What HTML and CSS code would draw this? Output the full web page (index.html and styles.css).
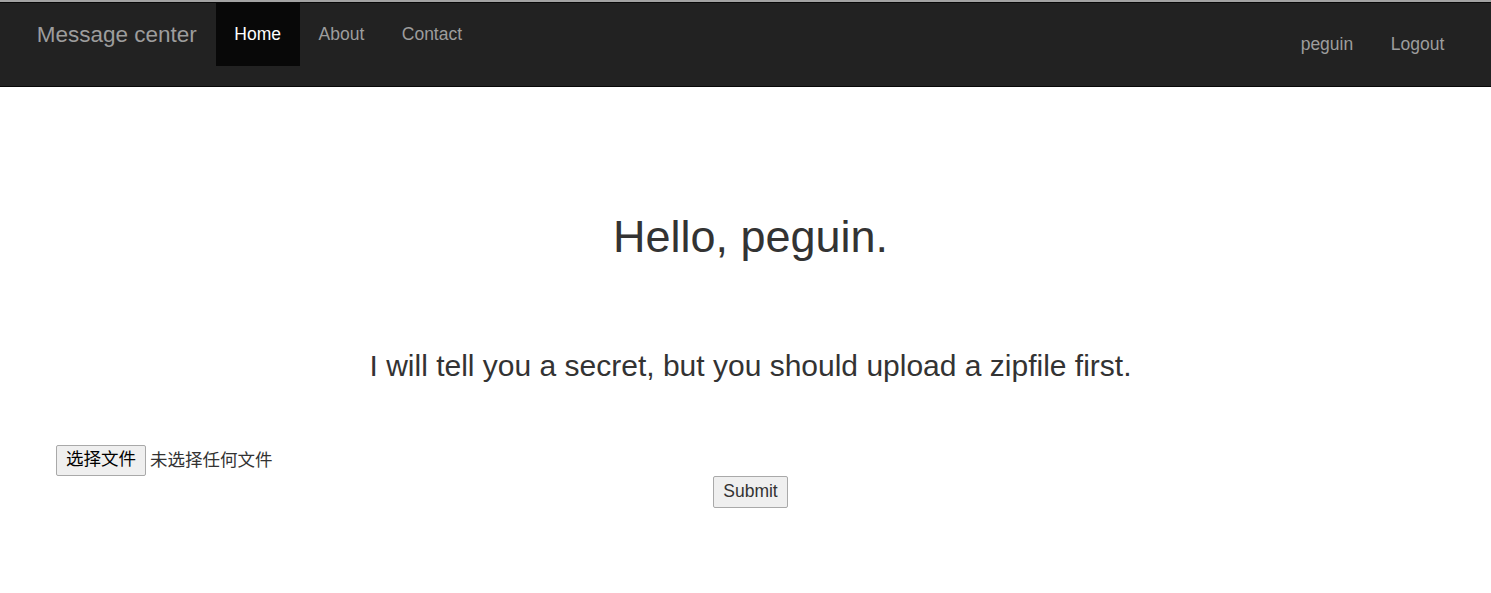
FILE: index.html
```html
<!DOCTYPE html>
<html lang="zh-CN">
<head>
<meta charset="utf-8">
<title>Message center</title>
<link rel="stylesheet" href="styles.css">
</head>
<body>
<div class="topline"></div>
<nav class="navbar">
  <div class="nav-left">
    <a class="brand" href="#">Message center</a>
    <ul class="nav">
      <li class="active"><a href="#">Home</a></li>
      <li><a href="#">About</a></li>
      <li><a href="#">Contact</a></li>
    </ul>
  </div>
  <ul class="nav nav-right">
    <li><a href="#">peguin</a></li>
    <li><a href="#">Logout</a></li>
  </ul>
</nav>
<main class="content">
  <h1 class="title">Hello, peguin.</h1>
  <h3 class="subtitle">I will tell you a secret, but you should upload a zipfile first.</h3>
  <form class="upload">
    <div class="file-row">
      <button type="button" class="btn">选择文件</button>
      <span class="file-name">未选择任何文件</span>
    </div>
    <div class="submit-row">
      <button type="submit" class="btn">Submit</button>
    </div>
  </form>
</main>
</body>
</html>
```
FILE: styles.css
```css
* { box-sizing: border-box; }
html, body { margin: 0; padding: 0; }
body {
  font-family: "Liberation Sans", Arial, "Noto Sans CJK SC", sans-serif;
  font-size: 17.5px;
  line-height: 1.42857;
  color: #333;
  background: #fff;
}
.topline { height: 2px; background: #a3a3a3; }
.navbar {
  display: flex;
  justify-content: space-between;
  align-items: flex-start;
  height: 85px;
  background: #222;
  border-top: 1px solid #080808;
  border-bottom: 1px solid #080808;
  padding: 0 28px 0 18px;
}
.nav-left { display: flex; }
.brand {
  display: block;
  padding: 18.75px 18.75px;
  font-size: 22.5px;
  line-height: 25px;
  color: #9d9d9d;
  text-decoration: none;
}
.nav { display: flex; list-style: none; margin: 0; padding: 0; }
.nav a {
  display: block;
  padding: 18.75px 18.75px;
  font-size: 17.5px;
  line-height: 25px;
  color: #9d9d9d;
  text-decoration: none;
}
.nav .active a { background: #080808; color: #fff; }
.nav-right { margin-top: 10px; }
.content { padding: 125px 0 0; }
.title {
  margin: 0;
  padding-left: 10px;
  text-align: center;
  font-size: 45px;
  font-weight: 500;
  line-height: 1.1;
}
.subtitle {
  margin: 87px 0 0;
  padding-left: 10px;
  text-align: center;
  font-size: 30px;
  font-weight: 500;
  line-height: 1.1;
}
.upload { margin-top: 63px; }
.file-row {
  display: flex;
  align-items: center;
  padding-left: 56px;
  height: 31px;
}
.btn {
  font-family: "Liberation Sans", Arial, "Noto Sans CJK SC", sans-serif;
  font-size: 17.5px;
  color: #000;
  background: #efefef;
  border: 1px solid #a9a9a9;
  border-radius: 2px;
  padding: 0 9px;
  height: 31px;
  line-height: 1;
}
.file-name { margin-left: 4px; color: #333; }
.submit-row { display: flex; justify-content: center; padding-left: 10px; }
.submit-row .btn { height: 32px; color: #333; }
```
